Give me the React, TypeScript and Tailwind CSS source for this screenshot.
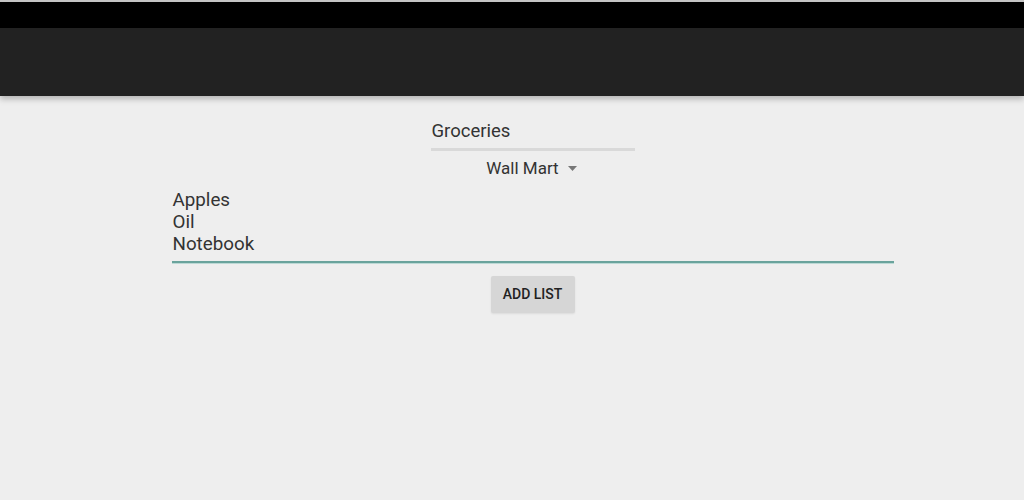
import React from 'react';

const App = () => {
  return (
    <div className="min-h-[500px] w-full bg-[#eeeeee] font-['Roboto',sans-serif] text-[#333]">
      {/* Status + app bar */}
      <div className="h-[2px] bg-[#c4c4c4]" />
      <div className="h-[26px] bg-black" />
      <div className="h-[68px] bg-[#222222] shadow-[0_3px_6px_rgba(0,0,0,0.25)]" />

      <main className="flex flex-col items-center pt-[23px] pl-[41px]">
        {/* List title */}
        <div className="w-[204px]">
          <div className="pl-[1px] text-[18.5px] leading-[24px] text-[#333]">Groceries</div>
          <div className="mt-[5px] h-[3px] bg-[#d9d9d9]" />
        </div>

        {/* Store dropdown */}
        <div className="mt-[6px] flex items-center gap-[9px] ml-[-2px] text-[17px] leading-[22px] text-[#333]">
          <span>Wall Mart</span>
          <svg width="9" height="5" viewBox="0 0 9 5" className="mt-[1px]">
            <path d="M0 0h9L4.5 5z" fill="#777" />
          </svg>
        </div>

        {/* Items */}
        <div className="mt-[10px] w-[722px]">
          <div className="pl-[1px] text-[18.8px] leading-[22px] text-[#333]">
            <div>Apples</div>
            <div>Oil</div>
            <div>Notebook</div>
          </div>
          <div className="mt-[6px] h-[2px] bg-[#6aa39c]" />
          <div className="h-[1px] bg-[#bcd9d5]" />
        </div>

        {/* Add button */}
        <button className="mt-[12px] h-[37px] w-[84px] rounded-[2px] bg-[#d6d6d6] text-[14px] font-medium text-[#222] shadow-[0_1px_2px_rgba(0,0,0,0.08)]">
          ADD LIST
        </button>
      </main>
    </div>
  );
};

export default App;
